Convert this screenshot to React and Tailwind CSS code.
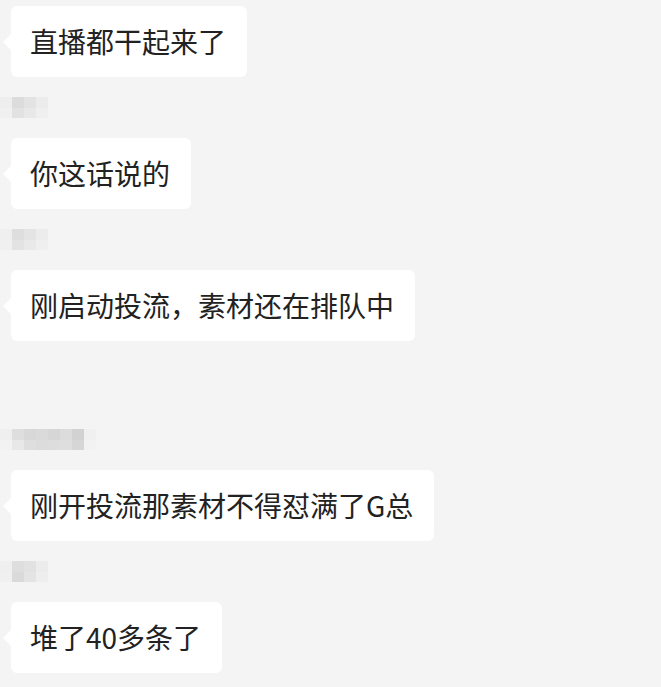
const messages = [
  { name: [['#efefef', '#f0f0f0'], ['#dadada', '#d6d6d6'], ['#e1e1e1', '#dedede'], ['#ececec', '#ededed']], text: '直播都干起来了' },
  { name: [['#eeeeee', '#f0f0f0'], ['#dcdcdc', '#e2e2e2'], ['#e3e3e3', '#e8e8e8'], ['#ececec', '#efefef']], text: '你这话说的' },
  { name: [['#efefef', '#f0f0f0'], ['#dedede', '#e3e3e3'], ['#e4e4e4', '#e9e9e9'], ['#ececec', '#efefef']], text: '刚启动投流，素材还在排队中' },
  {
    name: [
      ['#efefef', '#f2f2f2'],
      ['#dedede', '#e8e8e8'],
      ['#d8d8d8', '#dedede'],
      ['#dadada', '#dcdcdc'],
      ['#d6d6d6', '#dddddd'],
      ['#dcdcdc', '#dedede'],
      ['#d2d2d2', '#d6d6d6'],
      ['#f0f0f0', '#f2f2f2'],
    ],
    text: '刚开投流那素材不得怼满了G总',
    gap: true,
  },
  { name: [['#efefef', '#f0f0f0'], ['#dedede', '#dadada'], ['#e2e2e2', '#e4e4e4'], ['#ececec', '#eeeeee']], text: '堆了40多条了' },
];

function BlurName({ shades }) {
  return (
    <div className="flex h-[21px] -ml-[11px] blur-[0.6px]">
      {shades.map(([top, bottom], i) => (
        <div key={i} className="flex h-full w-[12px] flex-col">
          <div className="h-[11px] w-full" style={{ backgroundColor: top }} />
          <div className="h-[11px] w-full" style={{ backgroundColor: bottom }} />
        </div>
      ))}
    </div>
  );
}

function Bubble({ children }) {
  return (
    <div className="relative self-start rounded-[6px] bg-white pl-[19px] pr-[21px] py-[20px] text-[28px] leading-[31px] text-[#222]">
      <span className="absolute -left-[8px] top-1/2 -translate-y-1/2 border-y-[8px] border-r-[8px] border-y-transparent border-r-white" />
      {children}
    </div>
  );
}

export default function App() {
  return (
    <div
      className="flex min-h-[687px] w-[661px] flex-col gap-[20px] bg-[#f4f4f4] pl-[11px] pt-[6px]"
      style={{ fontFamily: '"Noto Sans CJK SC", "Noto Sans", sans-serif' }}
    >
      {messages.map((m, i) => (
        <div key={i} className="contents">
          {i > 0 && (
            <div className={m.gap ? 'mt-[68px]' : ''}>
              <BlurName shades={m.name} />
            </div>
          )}
          <Bubble>{m.text}</Bubble>
        </div>
      ))}
    </div>
  );
}
